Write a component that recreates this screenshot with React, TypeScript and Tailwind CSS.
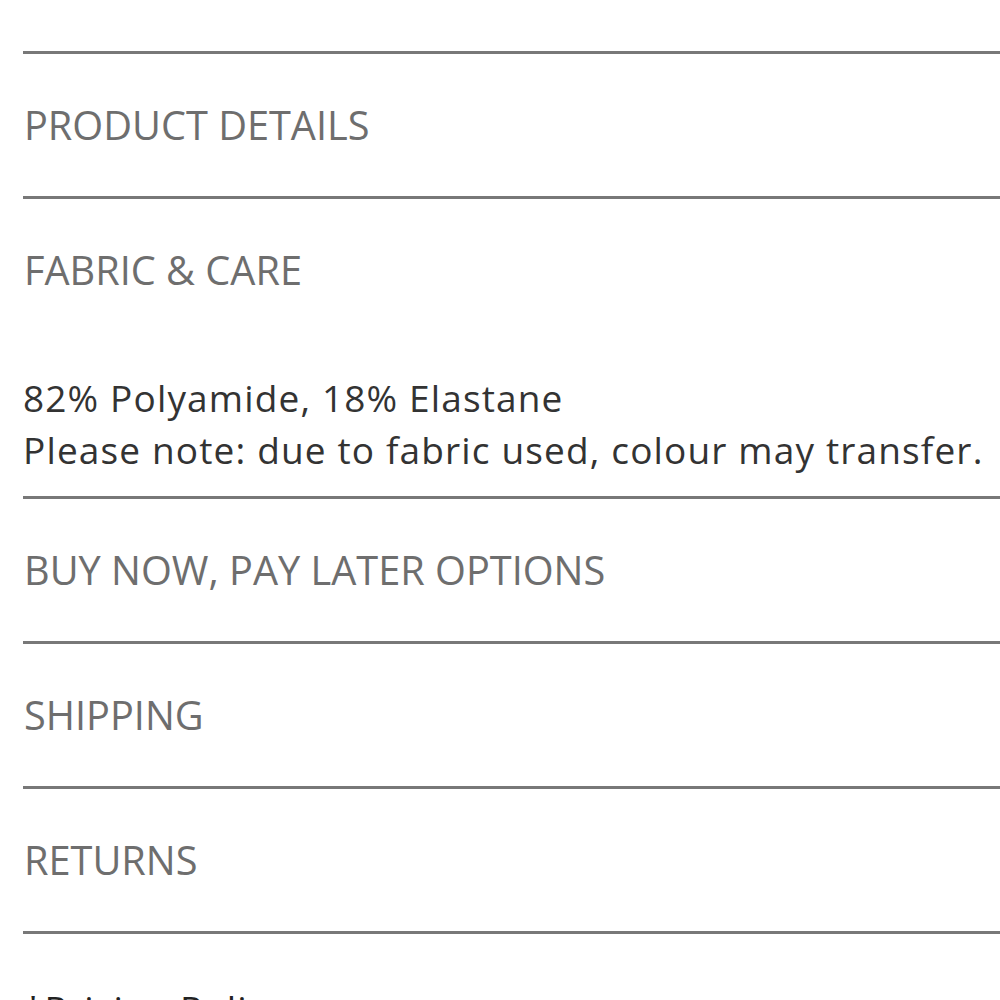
import React from "react";

type Section = { title: string; body?: string[] };

const sections: Section[] = [
  { title: "PRODUCT DETAILS" },
  {
    title: "FABRIC & CARE",
    body: [
      "82% Polyamide, 18% Elastane",
      "Please note: due to fabric used, colour may transfer.",
    ],
  },
  { title: "BUY NOW, PAY LATER OPTIONS" },
  { title: "SHIPPING" },
  { title: "RETURNS" },
];

function AccordionItem({ section }: { section: Section }) {
  return (
    <div className="border-t-[3px] border-[#787878]">
      <button
        type="button"
        className="flex h-[142px] w-full items-center pl-[1px] text-left text-[39.7px] leading-[40px] text-[#6e6e6e] font-['Open_Sans',sans-serif]"
      >
        {section.title}
      </button>
      {section.body && (
        <div className="pt-[31px] pb-[20px] text-[37px] leading-[52px] tracking-[1.15px] text-[#333333] font-['Open_Sans',sans-serif]">
          {section.body.map((line) => (
            <p key={line} className="whitespace-nowrap">
              {line}
            </p>
          ))}
        </div>
      )}
    </div>
  );
}

export default function App() {
  return (
    <div className="h-[1000px] overflow-hidden bg-white pl-[23px] pt-[51px]">
      {sections.map((s) => (
        <AccordionItem key={s.title} section={s} />
      ))}
      <div className="border-t-[3px] border-[#787878] pt-[56px]">
        <p className="text-[37px] leading-[38px] tracking-[1.15px] text-[#222222] font-['Open_Sans',sans-serif]">
          *Pricing Policy
        </p>
      </div>
    </div>
  );
}
